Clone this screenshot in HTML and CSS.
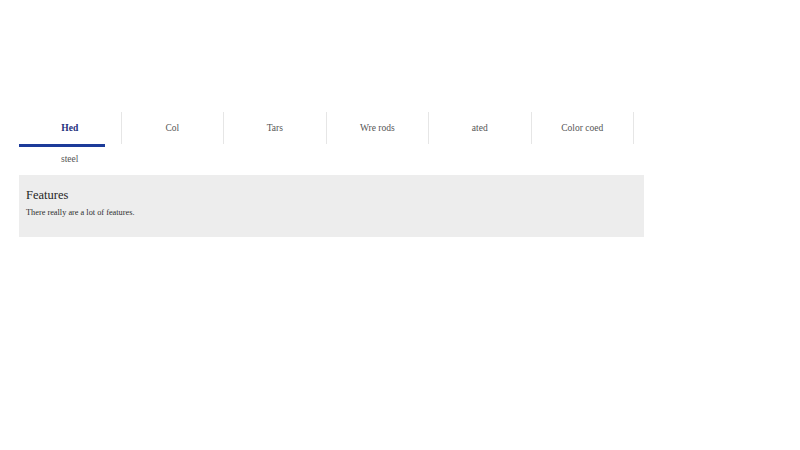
FILE: index.html
```html
<!DOCTYPE html>
<html>
<head>
<meta charset="utf-8">
<link rel="stylesheet" href="styles.css">
</head>
<body>
<div class="page">
  <div class="tabs">
    <div class="tab active"><span class="label"><b class="label-main">Hed</b> <span class="label-rest">steel</span></span></div>
    <div class="tab"><span class="label">Col</span></div>
    <div class="tab"><span class="label">Tars</span></div>
    <div class="tab"><span class="label">Wre rods</span></div>
    <div class="tab"><span class="label">ated</span></div>
    <div class="tab"><span class="label">Color coed</span></div>
  </div>
  <div class="panel">
    <h2 class="panel-title">Features</h2>
    <p class="panel-text">There really are a lot of features.</p>
  </div>
</div>
</body>
</html>
```
FILE: styles.css
```css
html, body {
  margin: 0;
  padding: 0;
  background: #ffffff;
}
.page {
  padding: 112px 0 0 19px;
  font-family: "Liberation Serif", "Times New Roman", serif;
}
.tabs {
  display: flex;
  width: 615px;
  height: 32px;
}
.tab {
  position: relative;
  width: 102.5px;
  flex: 0 0 102.5px;
  box-sizing: border-box;
  border-right: 1px solid #e6e6e6;
  text-align: center;
  font-size: 9.5px;
  line-height: 31px;
  padding: 1px 12px 0 12px;
  color: #555555;
}
.tab.active .label {
  display: inline-block;
  width: 30px;
}
.label-main {
  color: #1e2f7c;
  font-weight: bold;
}
.label-rest {
  color: #555555;
  font-weight: normal;
}
.tab.active::after {
  content: "";
  position: absolute;
  left: 0;
  top: 32px;
  width: 86px;
  height: 3px;
  background: #1c3b99;
}
.panel {
  margin-top: 31px;
  width: 625px;
  height: 62px;
  box-sizing: border-box;
  background: #ededed;
  padding: 13px 7px 0 7px;
}
.panel-title {
  margin: 0;
  font-size: 12.5px;
  font-weight: normal;
  line-height: 14px;
  color: #262626;
}
.panel-text {
  margin: 6px 0 0 0;
  font-size: 8.3px;
  line-height: 10px;
  color: #2e2e2e;
}
```
